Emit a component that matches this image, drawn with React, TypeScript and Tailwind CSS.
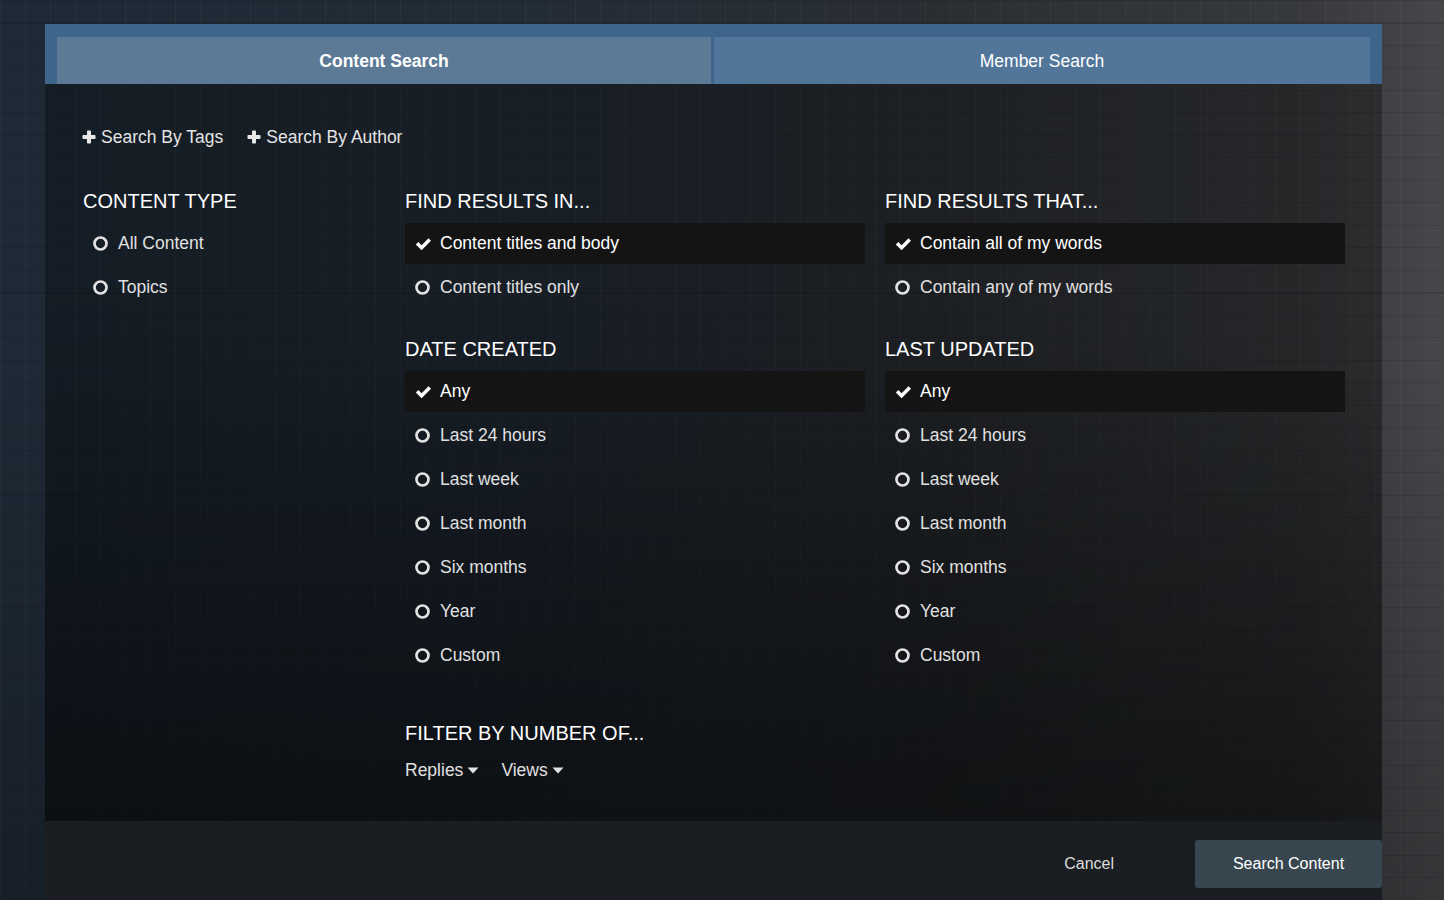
import React from 'react';

type Option = { label: string; selected?: boolean };

const contentType: Option[] = [{ label: 'All Content' }, { label: 'Topics' }];
const findIn: Option[] = [{ label: 'Content titles and body', selected: true }, { label: 'Content titles only' }];
const findThat: Option[] = [{ label: 'Contain all of my words', selected: true }, { label: 'Contain any of my words' }];
const dates: Option[] = [
  { label: 'Any', selected: true },
  { label: 'Last 24 hours' },
  { label: 'Last week' },
  { label: 'Last month' },
  { label: 'Six months' },
  { label: 'Year' },
  { label: 'Custom' },
];

function PlusIcon() {
  return (
    <svg width="14" height="14" viewBox="0 0 14 14" className="shrink-0">
      <rect x="5" y="0.5" width="4" height="13" rx="0.8" fill="#e8e8e8" />
      <rect x="0.5" y="5" width="13" height="4" rx="0.8" fill="#e8e8e8" />
    </svg>
  );
}

function CheckIcon() {
  return (
    <svg width="17" height="14" viewBox="0 0 17 14" className="shrink-0">
      <path d="M0.8 7.4 L3.3 4.9 L6.6 8.2 L13.5 1.3 L16 3.8 L6.6 13.2 Z" fill="#ffffff" />
    </svg>
  );
}

function CircleIcon() {
  return (
    <svg width="17" height="15" viewBox="0 0 17 15" className="shrink-0">
      <circle cx="7.5" cy="7.5" r="6" fill="none" stroke="#e2e2e2" strokeWidth="2.7" />
    </svg>
  );
}

function Caret() {
  return (
    <svg width="12" height="7" viewBox="0 0 12 7" className="ml-[4px] shrink-0">
      <path d="M0.5 0.5 L11.5 0.5 L6 6.5 Z" fill="#e2e2e2" />
    </svg>
  );
}

function Heading({ children }: { children: React.ReactNode }) {
  return <h3 className="h-6 text-[20px] leading-6 uppercase text-white mb-[10px]">{children}</h3>;
}

function OptionRow({ option }: { option: Option }) {
  return (
    <div
      className={`flex items-center h-[41px] mb-[3px] pl-[10px] text-[17.5px] ${
        option.selected ? 'bg-[#141414] text-white' : 'text-[#e0e0e0]'
      }`}
    >
      <span className="w-[17px] flex items-center">{option.selected ? <CheckIcon /> : <CircleIcon />}</span>
      <span className="ml-[8px]">{option.label}</span>
    </div>
  );
}

function Section({ title, options, className = '' }: { title: string; options: Option[]; className?: string }) {
  return (
    <div className={className}>
      <Heading>{title}</Heading>
      {options.map((o) => (
        <OptionRow key={o.label} option={o} />
      ))}
    </div>
  );
}

export default function App() {
  return (
    <div
      className="relative h-[900px] w-full overflow-hidden bg-[linear-gradient(to_right,#1e2935_0%,#222c37_35%,#2a2e33_65%,#37393c_90%,#46474a_100%)]"
      style={{ fontFamily: '"Liberation Sans", Arial, sans-serif' }}
    >
      {/* blurred grid backdrop */}
      <div className="absolute inset-0 bg-[repeating-linear-gradient(to_bottom,rgba(0,0,0,0.12)_0px,rgba(0,0,0,0.12)_1px,transparent_1px,transparent_22.5px),repeating-linear-gradient(to_right,rgba(255,255,255,0.03)_0px,rgba(255,255,255,0.03)_1px,transparent_1px,transparent_25px)]" />
      <div className="absolute inset-0 bg-[linear-gradient(to_bottom,transparent_40%,rgba(0,0,0,0.25))]" />

      <div className="relative pl-[45px] pt-[24px]">
        <div className="w-[1337px]">
          {/* tabs */}
          <div className="flex bg-[#3e658b] px-[12px] pt-[13px]">
            <button className="h-[47px] w-[654px] bg-[#5c7a96] pt-[2px] text-[17.5px] font-bold text-white">
              Content Search
            </button>
            <div className="w-[3px]" />
            <button className="h-[47px] flex-1 bg-[#52769a] pt-[2px] text-[17.5px] text-white">Member Search</button>
          </div>

          {/* body */}
          <div className="relative bg-black/30">
            <div className="absolute inset-0 bg-[linear-gradient(to_bottom,transparent_25%,rgba(0,0,0,0.3)_100%)]" />
            <div className="relative px-[37px] pt-[41px] pb-[39px]">
              <div className="flex h-6 items-center text-[17.5px] text-[#e4e4e4]">
                <span className="flex items-center">
                  <PlusIcon />
                  <span className="ml-[5px]">Search By Tags</span>
                </span>
                <span className="ml-[24px] flex items-center">
                  <PlusIcon />
                  <span className="ml-[5px]">Search By Author</span>
                </span>
              </div>

              <div className="mt-[40px] grid grid-cols-[303px_460px_460px] gap-x-[20px]">
                <div className="pl-[1px]">
                  <Section title="Content Type" options={contentType} />
                </div>
                <div>
                  <Section title="Find results in..." options={findIn} className="mb-[29px]" />
                  <Section title="Date created" options={dates} />
                </div>
                <div>
                  <Section title="Find results that..." options={findThat} className="mb-[29px]" />
                  <Section title="Last updated" options={dates} />
                </div>
              </div>

              <div className="mt-[42px] ml-[323px]">
                <h3 className="h-6 text-[20px] leading-6 uppercase text-white">Filter by number of...</h3>
                <div className="mt-[13px] flex h-6 items-center text-[17.5px] text-[#e0e0e0]">
                  <span className="flex items-center">
                    Replies
                    <Caret />
                  </span>
                  <span className="ml-[22px] flex items-center">
                    Views
                    <Caret />
                  </span>
                </div>
              </div>
            </div>
          </div>

          {/* footer */}
          <div className="flex h-[79px] items-start justify-end bg-[#1a1d21] pt-[19px]">
            <button className="mr-[81px] h-[48px] text-[16px] text-[#dcdcdc]">Cancel</button>
            <button className="h-[48px] w-[187px] rounded-[3px] bg-[#38474f] text-[16px] text-white">Search Content</button>
          </div>
        </div>
      </div>
    </div>
  );
}
